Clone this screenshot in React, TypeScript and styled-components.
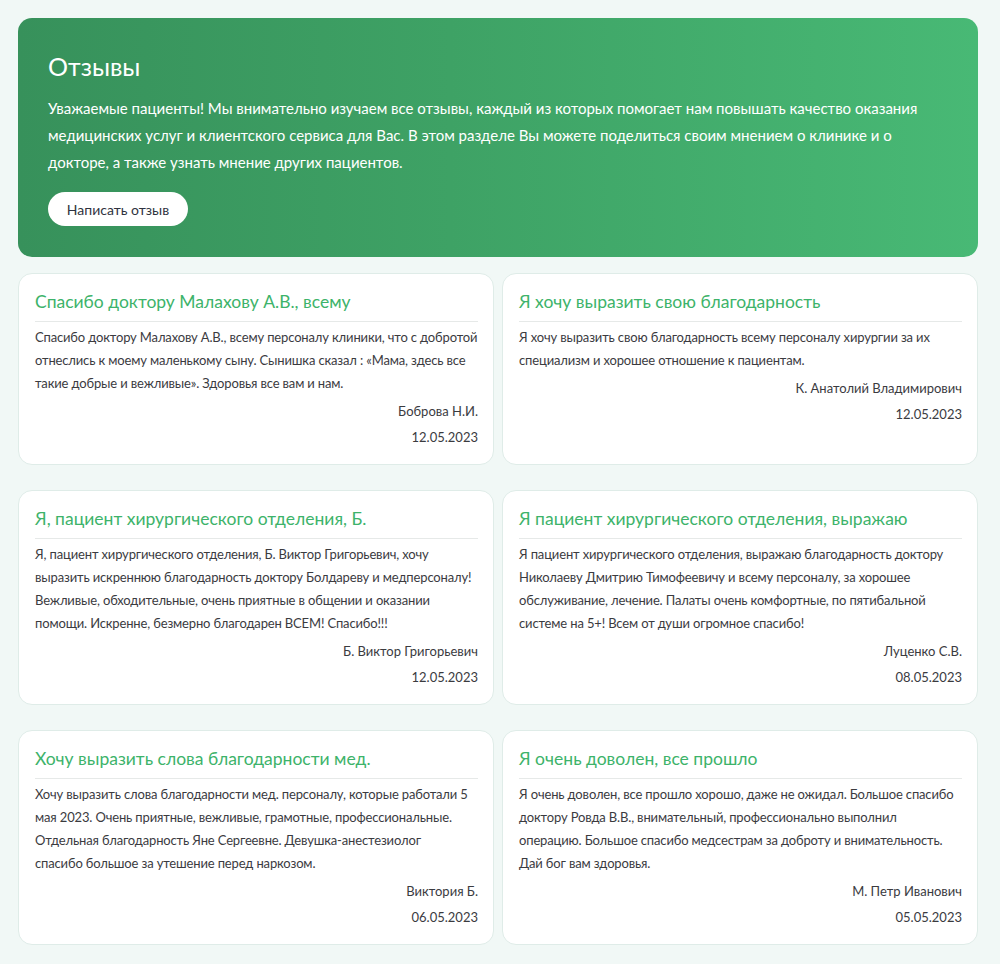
import React from "react";
import styled, { createGlobalStyle } from "styled-components";

const Global = createGlobalStyle`
  html, body { margin: 0; padding: 0; background: #f1f8f6; }
  body { font-family: Lato, "Noto Sans", sans-serif; }
  * { box-sizing: border-box; }
`;

const Page = styled.div`
  padding: 18px 22px 20px 18px;
  display: flex;
  flex-direction: column;
  gap: 16px;
`;

const Hero = styled.section`
  border-radius: 14px;
  background: linear-gradient(90deg, #37915b 0%, #3ea265 45%, #48b975 100%);
  padding: 32px 30px 31px 30px;
  color: #fff;
`;

const HeroTitle = styled.h1`
  margin: 0;
  font-size: 25px;
  line-height: 32px;
  font-weight: 400;
`;

const HeroText = styled.p`
  margin: 13px 0 0 0;
  font-size: 15px;
  line-height: 27px;
  max-width: 880px;
`;

const HeroButton = styled.button`
  margin-top: 16px;
  height: 34px;
  width: 140px;
  border: none;
  border-radius: 17px;
  background: #fff;
  color: #2f3340;
  font-family: inherit;
  font-size: 14px;
  cursor: pointer;
`;

const Grid = styled.div`
  display: grid;
  grid-template-columns: 1fr 1fr;
  column-gap: 8px;
  row-gap: 25px;
`;

const Card = styled.article`
  background: #fff;
  border: 1px solid #dfece8;
  border-radius: 14px;
  padding: 15px 15px 14px 16px;
  display: flex;
  flex-direction: column;
`;

const CardTitle = styled.h2`
  margin: 0;
  font-size: 17.5px;
  line-height: 26px;
  font-weight: 400;
  color: #3db36a;
  padding-bottom: 6px;
  border-bottom: 1px solid #e6e9e8;
`;

const CardBody = styled.p`
  margin: 4px 0 3px 0;
  font-size: 13px;
  line-height: 23px;
  letter-spacing: -0.15px;
  color: #3b3b3f;
  white-space: pre-line;
`;

const Meta = styled.div`
  text-align: right;
  font-size: 13px;
  line-height: 26px;
  color: #3b3b3f;
`;

const reviews = [
  {
    title: "Спасибо доктору Малахову А.В., всему",
    text: "Спасибо доктору Малахову А.В., всему персоналу клиники, что с добротой отнеслись к моему маленькому сыну. Сынишка сказал : «Мама, здесь все такие добрые и вежливые». Здоровья все вам и нам.",
    author: "Боброва Н.И.",
    date: "12.05.2023",
  },
  {
    title: "Я хочу выразить свою благодарность",
    text: "Я хочу выразить свою благодарность всему персоналу хирургии за их специализм и хорошее отношение к пациентам.",
    author: "К. Анатолий Владимирович",
    date: "12.05.2023",
  },
  {
    title: "Я, пациент хирургического отделения, Б.",
    text: "Я, пациент хирургического отделения, Б. Виктор Григорьевич, хочу выразить искреннюю благодарность доктору Болдареву и медперсоналу! Вежливые, обходительные, очень приятные в общении и оказании помощи. Искренне, безмерно благодарен ВСЕМ! Спасибо!!!",
    author: "Б. Виктор Григорьевич",
    date: "12.05.2023",
  },
  {
    title: "Я пациент хирургического отделения, выражаю",
    text: "Я пациент хирургического отделения, выражаю благодарность доктору Николаеву Дмитрию Тимофеевичу и всему персоналу, за хорошее обслуживание, лечение. Палаты очень комфортные, по пятибальной системе на 5+! Всем от души огромное спасибо!",
    author: "Луценко С.В.",
    date: "08.05.2023",
  },
  {
    title: "Хочу выразить слова благодарности мед.",
    text: "Хочу выразить слова благодарности мед. персоналу, которые работали 5 мая 2023. Очень приятные, вежливые, грамотные, профессиональные. Отдельная благодарность Яне Сергеевне. Девушка-анестезиолог\nспасибо большое за утешение перед наркозом.",
    author: "Виктория Б.",
    date: "06.05.2023",
  },
  {
    title: "Я очень доволен, все прошло",
    text: "Я очень доволен, все прошло хорошо, даже не ожидал. Большое спасибо доктору Ровда В.В., внимательный, профессионально выполнил операцию. Большое спасибо медсестрам за доброту и внимательность. Дай бог вам здоровья.",
    author: "М. Петр Иванович",
    date: "05.05.2023",
  },
];

export default function App() {
  return (
    <>
      <Global />
      <Page>
        <Hero>
          <HeroTitle>Отзывы</HeroTitle>
          <HeroText>
            Уважаемые пациенты! Мы внимательно изучаем все отзывы, каждый из которых помогает нам повышать качество оказания медицинских услуг и клиентского сервиса для Вас. В этом разделе Вы можете поделиться своим мнением о клинике и о докторе, а также узнать мнение других пациентов.
          </HeroText>
          <HeroButton>Написать отзыв</HeroButton>
        </Hero>
        <Grid>
          {reviews.map((r) => (
            <Card key={r.title}>
              <CardTitle>{r.title}</CardTitle>
              <CardBody>{r.text}</CardBody>
              <Meta>{r.author}</Meta>
              <Meta>{r.date}</Meta>
            </Card>
          ))}
        </Grid>
      </Page>
    </>
  );
}
